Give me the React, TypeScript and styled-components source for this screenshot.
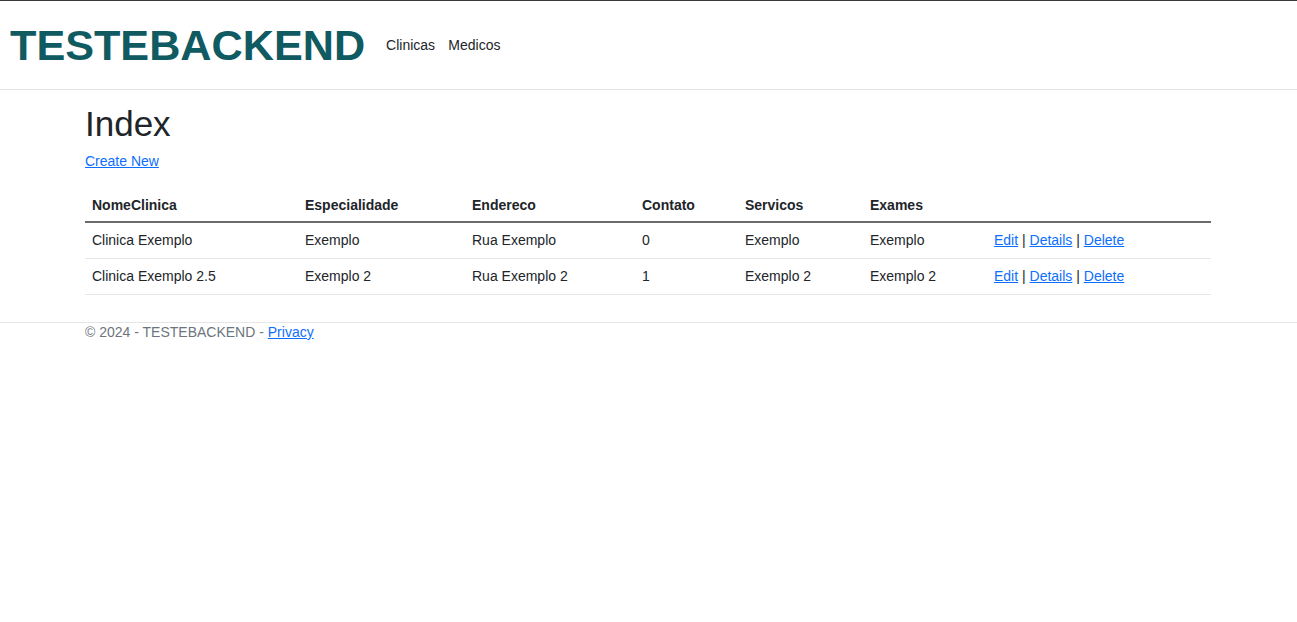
import React from 'react';
import styled, { createGlobalStyle } from 'styled-components';

interface Clinica {
  nome: string;
  especialidade: string;
  endereco: string;
  contato: string;
  servicos: string;
  exames: string;
}

const clinicas: Clinica[] = [
  {
    nome: 'Clinica Exemplo',
    especialidade: 'Exemplo',
    endereco: 'Rua Exemplo',
    contato: '0',
    servicos: 'Exemplo',
    exames: 'Exemplo',
  },
  {
    nome: 'Clinica Exemplo 2.5',
    especialidade: 'Exemplo 2',
    endereco: 'Rua Exemplo 2',
    contato: '1',
    servicos: 'Exemplo 2',
    exames: 'Exemplo 2',
  },
];

const columns = [
  { label: 'NomeClinica', width: 213 },
  { label: 'Especialidade', width: 167 },
  { label: 'Endereco', width: 170 },
  { label: 'Contato', width: 103 },
  { label: 'Servicos', width: 125 },
  { label: 'Exames', width: 124 },
  { label: '', width: 224 },
];

const GlobalStyle = createGlobalStyle`
  html, body {
    margin: 0;
    padding: 0;
    background: #fff;
  }
  body {
    font-family: "Liberation Sans", Arial, sans-serif;
    font-size: 14px;
    line-height: 1.5;
    color: #212529;
    border-top: 1px solid #3a3a3a;
  }
  * {
    box-sizing: border-box;
  }
`;

const Header = styled.header`
  display: flex;
  align-items: center;
  height: 89px;
  padding: 0 10px;
  border-bottom: 1px solid #e5e5e5;
`;

const Brand = styled.a`
  font-size: 43.2px;
  font-weight: 700;
  line-height: 1;
  color: #105a62;
  text-decoration: none;
  margin-right: 14.4px;
  margin-top: 1px;
`;

const Nav = styled.nav`
  display: flex;
  margin-top: 1px;
`;

const NavLink = styled.a`
  padding: 0 6.6px;
  color: #212529;
  text-decoration: none;
  font-size: 14px;
`;

const Container = styled.main`
  width: 1126px;
  margin-left: 85px;
  padding-bottom: 13px;
`;

const Title = styled.h1`
  font-size: 35px;
  font-weight: 400;
  line-height: 1.2;
  margin: 13px 0 6px;
`;

const Link = styled.a`
  color: #0d6efd;
  text-decoration: underline;
`;

const Para = styled.p`
  margin: 0 0 15px;
`;

const Table = styled.table`
  width: 1126px;
  border-collapse: collapse;
  table-layout: fixed;
  margin-bottom: 14px;
`;

const HeadCell = styled.th<{ $width: number }>`
  width: ${p => p.$width}px;
  text-align: left;
  font-weight: 700;
  padding: 8px 7px 5px;
  border-bottom: 2px solid #6b6b6b;
`;

const Row = styled.tr`
  border-bottom: 1px solid #e6e6e6;
`;

const Cell = styled.td`
  padding: 7px 7px;
  vertical-align: top;
  white-space: nowrap;
`;

const Footer = styled.footer`
  border-top: 1px solid #e6e6e6;
  color: #6c757d;
  padding: 1px 0 0 85px;
  line-height: 1.2;
  white-space: nowrap;
`;

export default function App() {
  return (
    <>
      <GlobalStyle />
      <Header>
        <Brand href="#">TESTEBACKEND</Brand>
        <Nav>
          <NavLink href="#">Clinicas</NavLink>
          <NavLink href="#">Medicos</NavLink>
        </Nav>
      </Header>
      <Container>
        <Title>Index</Title>
        <Para>
          <Link href="#">Create New</Link>
        </Para>
        <Table>
          <thead>
            <tr>
              {columns.map(c => (
                <HeadCell key={c.label || 'actions'} $width={c.width}>
                  {c.label}
                </HeadCell>
              ))}
            </tr>
          </thead>
          <tbody>
            {clinicas.map(c => (
              <Row key={c.nome}>
                <Cell>{c.nome}</Cell>
                <Cell>{c.especialidade}</Cell>
                <Cell>{c.endereco}</Cell>
                <Cell>{c.contato}</Cell>
                <Cell>{c.servicos}</Cell>
                <Cell>{c.exames}</Cell>
                <Cell>
                  <Link href="#">Edit</Link> | <Link href="#">Details</Link> |{' '}
                  <Link href="#">Delete</Link>
                </Cell>
              </Row>
            ))}
          </tbody>
        </Table>
      </Container>
      <Footer>
        © 2024 - TESTEBACKEND - <Link href="#">Privacy</Link>
      </Footer>
    </>
  );
}
